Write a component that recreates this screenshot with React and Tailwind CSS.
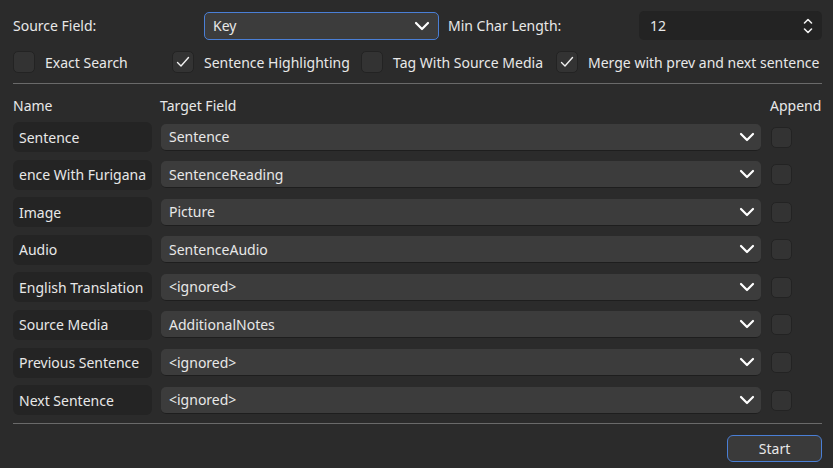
import React from "react";

const Chevron = ({ className = "" }) => (
  <svg width="16" height="10" viewBox="0 0 16 10" className={className} fill="none">
    <path d="M2 2 L8 8 L14 2" stroke="#ffffff" strokeWidth="2.2" strokeLinecap="round" strokeLinejoin="round" />
  </svg>
);

const Check = () => (
  <svg width="14" height="12" viewBox="0 0 14 12" fill="none">
    <path d="M1.5 6.5 L5 10 L12.5 1.5" stroke="#f0f0f0" strokeWidth="1.4" strokeLinecap="round" strokeLinejoin="round" />
  </svg>
);

const Box = ({ checked, size = "w-[22px] h-[22px]" }) => (
  <div className={`${size} shrink-0 rounded-[5px] bg-[#333333] border border-[#232323] flex items-center justify-center`}>
    {checked ? <Check /> : null}
  </div>
);

const CheckItem = ({ checked, label, w }) => (
  <div className={`flex items-center gap-[10px] ${w}`}>
    <Box checked={checked} />
    <span className="whitespace-nowrap">{label}</span>
  </div>
);

const all = [
  ["Sentence", "Sentence"],
  ["ence With Furigana", "SentenceReading"],
  ["Image", "Picture"],
  ["Audio", "SentenceAudio"],
  ["English Translation", "<ignored>"],
  ["Source Media", "AdditionalNotes"],
  ["Previous Sentence", "<ignored>"],
  ["Next Sentence", "<ignored>"],
];

export default function App() {
  return (
    <div
      className="w-[833px] h-[468px] bg-[#2b2b2b] text-[#e8e8e8] text-[14px] pl-[13px] pr-[11px] pt-[11px] overflow-hidden"
      style={{ fontFamily: '"Noto Sans", "Open Sans", sans-serif' }}
    >
      {/* row 1 */}
      <div className="flex items-center">
        <div className="w-[191px]">Source Field:</div>
        <div className="w-[235px] h-[28px] rounded-[5px] border border-[#4a7fd6] bg-[#3c3c3c] flex items-center justify-between pl-[8px] pr-[8px]">
          <span>Key</span>
          <Chevron />
        </div>
        <div className="w-[200px] pl-[9px]">Min Char Length:</div>
        <div className="flex-1 h-[29px] rounded-[5px] bg-[#232323] flex items-center justify-between pl-[11px] pr-[8px]">
          <span>12</span>
          <svg width="12" height="18" viewBox="0 0 12 18" fill="none">
            <path d="M2.5 6 L6 2.5 L9.5 6" stroke="#f0f0f0" strokeWidth="1.6" strokeLinecap="round" strokeLinejoin="round" />
            <path d="M2.5 12 L6 15.5 L9.5 12" stroke="#f0f0f0" strokeWidth="1.6" strokeLinecap="round" strokeLinejoin="round" />
          </svg>
        </div>
      </div>

      {/* row 2 */}
      <div className="flex items-center mt-[11px]">
        <CheckItem label="Exact Search" w="w-[159px]" />
        <CheckItem checked label="Sentence Highlighting" w="w-[189px]" />
        <CheckItem label="Tag With Source Media" w="w-[195px]" />
        <CheckItem checked label="Merge with prev and next sentence" w="flex-1" />
      </div>

      <div className="h-px bg-[#6a6a6a] mt-[10px]" />

      {/* header */}
      <div className="grid grid-cols-[139px_600px_1fr] gap-x-[8px] mt-[10px] h-[22px] items-center">
        <div>Name</div>
        <div>Target Field</div>
        <div className="pl-[2px]">Append</div>
      </div>

      {/* rows */}
      <div className="flex flex-col gap-[7.6px] mt-[6px]">
        {all.map(([name, target], i) => (
          <div key={i} className="flex items-center h-[30px]">
            <div className="w-[139px] h-[30px] rounded-[6px] bg-[#242424] flex items-center overflow-hidden pl-[6px]">
              <span className="whitespace-nowrap">{name}</span>
            </div>
            <div className="ml-[9px] w-[600px] h-[27px] rounded-[5px] bg-[#3c3c3c] border-b border-[#1e1e1e] flex items-center justify-between pl-[8px] pr-[6px]">
              <span>{target}</span>
              <Chevron />
            </div>
            <div className="ml-[10px]">
              <Box size="w-[21px] h-[21px]" />
            </div>
          </div>
        ))}
      </div>

      <div className="h-px bg-[#6a6a6a] mt-[8px]" />

      <div className="flex justify-end mt-[11px]">
        <div className="w-[95px] h-[27px] rounded-[6px] border border-[#4a7fd6] bg-[#3a3a3a] flex items-center justify-center">
          Start
        </div>
      </div>
    </div>
  );
}
